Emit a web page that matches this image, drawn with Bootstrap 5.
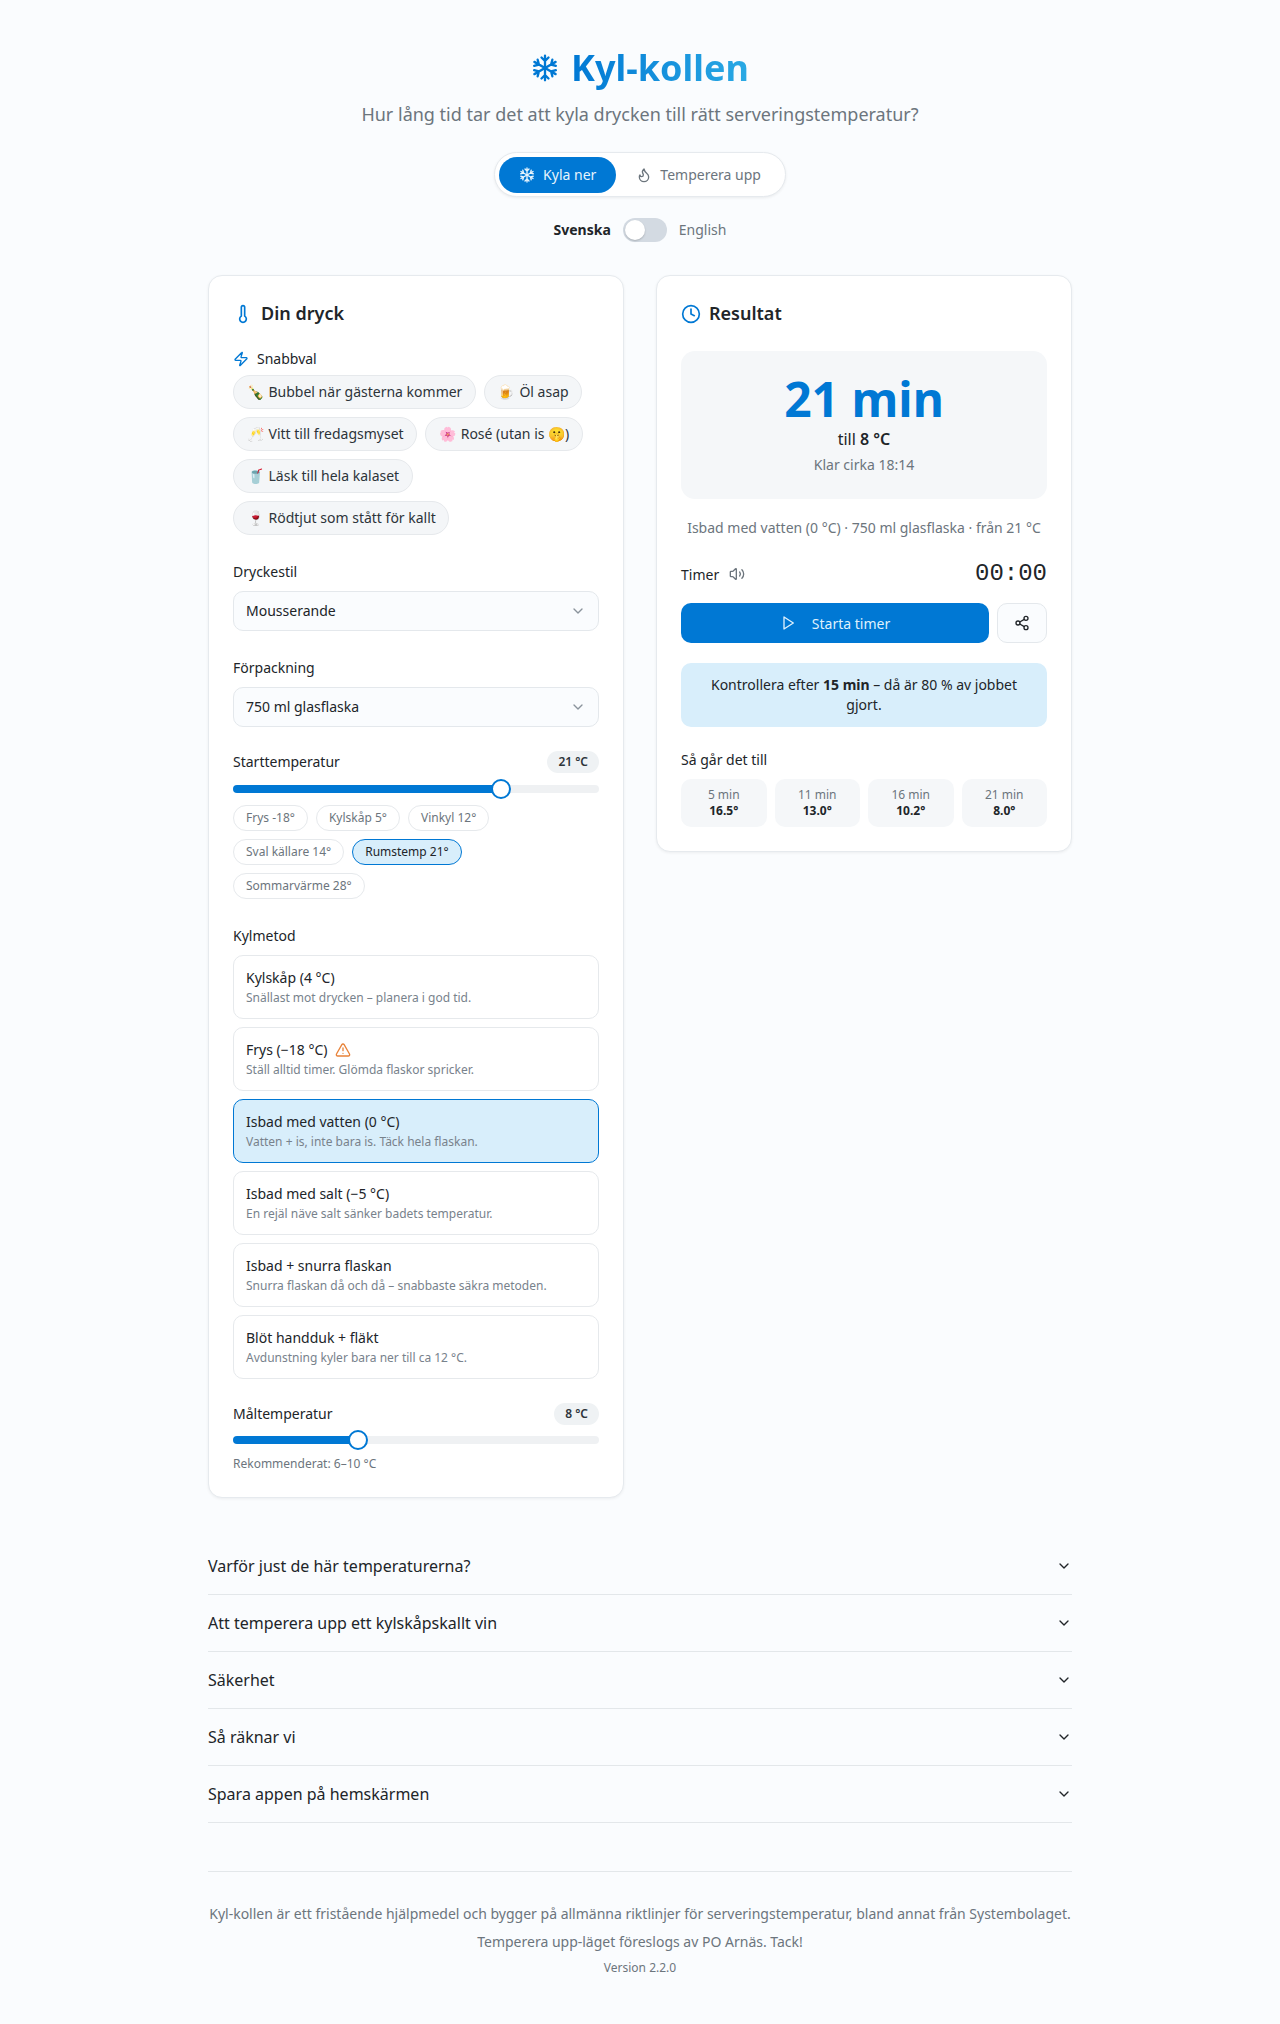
<!DOCTYPE html>
<html lang="sv">
<head>
    <meta charset="UTF-8">
    <meta name="viewport" content="width=device-width, initial-scale=1.0">
    <title>Kyl-kollen</title>
    <link href="https://cdn.jsdelivr.net/npm/bootstrap@5.3.0/dist/css/bootstrap.min.css" rel="stylesheet">
    <style>
        body {
            font-family: "Noto Sans", "Liberation Sans", sans-serif;
            background-color: #fafcfe;
            color: #212529;
            font-size: 14px;
        }
        svg.ico {
            fill: none;
            stroke: currentColor;
            stroke-width: 2;
            stroke-linecap: round;
            stroke-linejoin: round;
            flex-shrink: 0;
        }
        .page-wrap {
            max-width: 896px;
            padding-top: 40px;
        }
        .app-title {
            font-size: 36px;
            font-weight: 700;
            line-height: 56px;
            margin: 0 0 5px;
            color: #0078d4;
            gap: 12px;
        }
        .app-title .grad {
            background: linear-gradient(90deg, #0078d4, #2aa9e4);
            -webkit-background-clip: text;
            background-clip: text;
            color: transparent;
        }
        .app-sub {
            font-size: 18px;
            line-height: 27px;
            color: #6c757d;
            margin: 0 0 24px;
        }
        /* mode switch */
        .mode-pill {
            background: #fff;
            border: 1px solid #e6eaee;
            border-radius: 23px;
            padding: 3.5px 4px;
            box-shadow: 0 1px 3px rgba(0, 0, 0, .07);
        }
        .mode-btn {
            display: flex;
            align-items: center;
            gap: 8px;
            height: 36px;
            padding: 0 20px;
            border: 0;
            border-radius: 18px;
            background: transparent;
            color: #6c757d;
            font-size: 14px;
        }
        .mode-btn.on {
            background: #0078d4;
            color: #e6f4fd;
        }
        .lang-row {
            margin-top: 21px;
            margin-bottom: 33px;
            height: 24px;
        }
        .lang-row > span {
            margin-top: -2px;
        }
        .lang-toggle {
            width: 44px;
            height: 24px;
            border-radius: 12px;
            background: #d3dae2;
            padding: 2px;
        }
        .lang-toggle span {
            display: block;
            width: 20px;
            height: 20px;
            border-radius: 50%;
            background: #fff;
            box-shadow: 0 1px 2px rgba(0, 0, 0, .2);
        }
        .cols {
            --bs-gutter-x: 32px;
        }
        .panel {
            background: #fff;
            border: 1px solid #e6eaee;
            border-radius: 14px;
            padding: 24px;
            box-shadow: 0 1px 3px rgba(0, 0, 0, .06);
        }
        .panel-head {
            font-size: 18px;
            font-weight: 600;
            line-height: 27px;
            margin: 0;
        }
        .ic-blue { color: #0078d4; }
        .fld-label {
            line-height: 21px;
            margin: 0;
            display: block;
        }
        .temp-head .fld-label {
            margin-top: -2px;
        }
        /* chips */
        .drink-chip {
            display: inline-flex;
            align-items: center;
            gap: 5px;
            height: 34px;
            padding: 0 12.5px 2px;
            border: 1px solid #e6e9ec;
            border-radius: 17px;
            background: #f4f6f8;
            color: #2d343a;
            font-size: 14px;
        }
        .temp-chip {
            height: 26px;
            padding: 0 12px;
            border: 1px solid #e6e9ec;
            border-radius: 13px;
            background: #fff;
            color: #6c757d;
            font-size: 12px;
        }
        .temp-chip.on {
            background: #d8eefb;
            border-color: #0078d4;
            color: #212529;
        }
        .sel-box {
            height: 40px;
            border: 1px solid #e4e8ec;
            border-radius: 10px;
            background-color: #fafcfe;
            background-image: url("data:image/svg+xml,%3csvg xmlns='http://www.w3.org/2000/svg' viewBox='0 0 24 24' fill='none' stroke='%238a939c' stroke-width='2' stroke-linecap='round' stroke-linejoin='round'%3e%3cpath d='m6 9 6 6 6-6'/%3e%3c/svg%3e");
            background-size: 16px 16px;
            background-position: right 12px center;
            color: #212529;
            font-size: 14px;
            padding: 0 36px 2px 12px;
        }
        .val-tag {
            font-size: 12px;
            font-weight: 600;
            line-height: 22px;
            height: 22px;
            padding: 0 11px;
            border-radius: 11px;
            background: #eff2f4;
            color: #2d343a;
        }
        /* range with filled track */
        .temp-range {
            -webkit-appearance: none;
            appearance: none;
            display: block;
            width: 100%;
            height: 20px;
            margin: 0;
            background: transparent;
        }
        .temp-range::-webkit-slider-runnable-track {
            height: 8px;
            border-radius: 4px;
            background: linear-gradient(90deg, #0078d4 var(--fill), #eff1f3 var(--fill));
        }
        .temp-range::-webkit-slider-thumb {
            -webkit-appearance: none;
            width: 20px;
            height: 20px;
            margin-top: -6px;
            border-radius: 50%;
            background: #fff;
            border: 2px solid #0078d4;
        }
        .method-card {
            height: 64px;
            padding: 12px;
            border: 1px solid #e6e9ec;
            border-radius: 10px;
            background: #fff;
        }
        .method-card.on {
            background: #d8eefb;
            border-color: #0078d4;
        }
        .method-name {
            line-height: 20px;
            display: flex;
            align-items: center;
            gap: 8px;
        }
        .method-note {
            font-size: 12px;
            line-height: 16px;
            color: #78828c;
            margin-top: 2px;
        }
        .warn-ic { color: #e8833a; }
        .hint-text {
            font-size: 12px;
            line-height: 18px;
            color: #6c757d;
        }
        /* result side */
        .hero-box {
            background: #f5f7f9;
            border-radius: 14px;
            padding: 24px;
            height: 148px;
        }
        .hero-num {
            font-size: 48px;
            font-weight: 700;
            line-height: 48px;
            color: #0078d4;
        }
        .hero-to {
            font-size: 16px;
            line-height: 24px;
            margin-top: 4px;
        }
        .hero-to b { font-weight: 600; }
        .hero-eta {
            line-height: 21px;
            color: #6c757d;
            margin-top: 3px;
        }
        .sum-line {
            line-height: 21px;
            color: #6c757d;
            margin-top: 18px;
            margin-bottom: 18px;
        }
        .clock-read {
            font-family: "Liberation Mono", monospace;
            font-size: 24px;
            line-height: 36px;
        }
        .timer-label { gap: 10px; }
        .mute-ic { color: #6c757d; }
        .start-btn {
            height: 40px;
            border: 0;
            border-radius: 10px;
            padding-bottom: 1px;
            background: #0078d4;
            color: #dff1fd;
            font-size: 14px;
        }
        .share-btn {
            width: 50px;
            height: 40px;
            border: 1px solid #e4e8ec;
            border-radius: 10px;
            background: #fafcfe;
            color: #212529;
        }
        .tip-box {
            background: #d8eefb;
            border-radius: 10px;
            padding: 12px 16px;
            line-height: 20px;
        }
        .step-grid {
            display: grid;
            grid-template-columns: repeat(4, 1fr);
            gap: 8px;
        }
        .step-box {
            background: #f5f7f9;
            border-radius: 10px;
            padding: 8px 4px;
            height: 48px;
            font-size: 12px;
            line-height: 16px;
        }
        .step-box span {
            display: block;
            color: #6c757d;
        }
        /* accordion */
        .faq-list {
            --bs-accordion-bg: transparent;
            --bs-accordion-border-color: #e3e7ea;
            --bs-accordion-btn-padding-x: 0;
            --bs-accordion-btn-padding-y: 16px;
            --bs-accordion-btn-icon-width: 16px;
            --bs-accordion-btn-color: #212529;
            --bs-accordion-btn-icon: url("data:image/svg+xml,%3csvg xmlns='http://www.w3.org/2000/svg' viewBox='0 0 24 24' fill='none' stroke='%23212529' stroke-width='2' stroke-linecap='round' stroke-linejoin='round'%3e%3cpath d='m6 9 6 6 6-6'/%3e%3c/svg%3e");
            margin-top: 40px;
        }
        .faq-list .accordion-button {
            font-size: 16px;
            line-height: 24px;
            box-shadow: none;
        }
        .faq-list .accordion-item:last-child {
            border-bottom: 1px solid #e3e7ea;
        }
        .foot-area {
            margin-top: 48px;
            padding-top: 31px;
            border-top: 1px solid #e3e7ea;
            color: #6c757d;
        }
        .foot-area p {
            margin: 0 0 7px;
            line-height: 21px;
        }
        .foot-ver {
            font-size: 12px;
            line-height: 18px;
        }
        /* spacing between the form rows */
        #quickLabel { margin-top: 21px; margin-bottom: 6px; }
        #styleLabel { margin-top: 26px; margin-bottom: 9px; }
        #packLabel { margin-top: 26px; margin-bottom: 9px; }
        #startHead { margin-top: 24px; margin-bottom: 6px; }
        #tempChips { margin-top: 6px; }
        #methodLabel { margin-top: 26px; margin-bottom: 9px; }
        #targetHead { margin-top: 24px; margin-bottom: 5px; }
        #targetHint { margin-top: 5px; }
        #resultHead { margin-bottom: 24px; }
        #timerBtns { margin-top: 11px; }
        #tipBox { margin-top: 20px; }
        #stepsLabel { margin-top: 22px; margin-bottom: 9px; }
    </style>
</head>
<body>
    <svg width="0" height="0" class="position-absolute">
        <defs>
            <symbol id="i-snow" viewBox="0 0 24 24">
                <path d="M12 12V1.5M9 3l3 3 3-3"/>
                <path d="M12 12V1.5M9 3l3 3 3-3" transform="rotate(60 12 12)"/>
                <path d="M12 12V1.5M9 3l3 3 3-3" transform="rotate(120 12 12)"/>
                <path d="M12 12V1.5M9 3l3 3 3-3" transform="rotate(180 12 12)"/>
                <path d="M12 12V1.5M9 3l3 3 3-3" transform="rotate(240 12 12)"/>
                <path d="M12 12V1.5M9 3l3 3 3-3" transform="rotate(300 12 12)"/>
            </symbol>
            <symbol id="i-flame" viewBox="0 0 24 24"><path d="M8.5 14.5A2.5 2.5 0 0 0 11 12c0-1.38-.5-2-1-3-1.072-2.143-.224-4.054 2-6 .5 2.5 2 4.9 4 6.5 2 1.6 3 3.5 3 5.5a7 7 0 1 1-14 0c0-1.153.433-2.294 1-3a2.5 2.5 0 0 0 2.5 2.5z"/></symbol>
            <symbol id="i-therm" viewBox="0 0 24 24"><path d="M14 4v10.54a4 4 0 1 1-4 0V4a2 2 0 0 1 4 0Z"/></symbol>
            <symbol id="i-zap" viewBox="0 0 24 24"><path d="M4 14a1 1 0 0 1-.78-1.63l9.9-10.2a.5.5 0 0 1 .86.46l-1.92 6.02A1 1 0 0 0 13 10h7a1 1 0 0 1 .78 1.63l-9.9 10.2a.5.5 0 0 1-.86-.46l1.92-6.02A1 1 0 0 0 11 14z"/></symbol>
            <symbol id="i-clock" viewBox="0 0 24 24"><circle cx="12" cy="12" r="10"/><polyline points="12 6 12 12 16 14"/></symbol>
            <symbol id="i-vol" viewBox="0 0 24 24"><path d="M11 4.702a.705.705 0 0 0-1.203-.498L6.413 7.587A1.4 1.4 0 0 1 5.416 8H3a1 1 0 0 0-1 1v6a1 1 0 0 0 1 1h2.416a1.4 1.4 0 0 1 .997.413l3.383 3.384A.705.705 0 0 0 11 19.298z"/><path d="M16 9a5 5 0 0 1 0 6"/><path d="M19.364 18.364a9 9 0 0 0 0-12.728"/></symbol>
            <symbol id="i-play" viewBox="0 0 24 24"><polygon points="6 3 20 12 6 21 6 3"/></symbol>
            <symbol id="i-share" viewBox="0 0 24 24"><circle cx="18" cy="5" r="3"/><circle cx="6" cy="12" r="3"/><circle cx="18" cy="19" r="3"/><line x1="8.59" y1="13.51" x2="15.42" y2="17.49"/><line x1="15.41" y1="6.51" x2="8.59" y2="10.49"/></symbol>
            <symbol id="i-warn" viewBox="0 0 24 24"><path d="m21.73 18-8-14a2 2 0 0 0-3.48 0l-8 14A2 2 0 0 0 4 21h16a2 2 0 0 0 1.73-3"/><path d="M12 9v4"/><path d="M12 17h.01"/></symbol>
        </defs>
    </svg>

    <div class="container page-wrap px-3">
        <!-- Header -->
        <header class="text-center">
            <h1 class="app-title d-flex justify-content-center align-items-center">
                <svg class="ico" width="28" height="28"><use href="#i-snow"/></svg>
                <span class="grad">Kyl-kollen</span>
            </h1>
            <p class="app-sub">Hur lång tid tar det att kyla drycken till rätt serveringstemperatur?</p>
            <div class="d-flex justify-content-center">
                <div class="mode-pill d-inline-flex">
                    <button class="mode-btn on"><svg class="ico" width="16" height="16"><use href="#i-snow"/></svg>Kyla ner</button>
                    <button class="mode-btn"><svg class="ico" width="16" height="16"><use href="#i-flame"/></svg>Temperera upp</button>
                </div>
            </div>
            <div class="lang-row d-flex justify-content-center align-items-center gap-2">
                <span class="fw-bold me-1">Svenska</span>
                <div class="lang-toggle"><span></span></div>
                <span class="text-secondary ms-1">English</span>
            </div>
        </header>

        <div class="row cols align-items-start">
            <!-- Input -->
            <div class="col-6">
                <section class="panel">
                    <h2 class="panel-head d-flex align-items-center gap-2"><svg class="ico ic-blue" width="20" height="20"><use href="#i-therm"/></svg>Din dryck</h2>

                    <div class="fld-label d-flex align-items-center gap-2" id="quickLabel"><svg class="ico ic-blue" width="16" height="16"><use href="#i-zap"/></svg>Snabbval</div>
                    <div class="d-flex flex-wrap gap-2" id="quickChips"></div>

                    <label class="fld-label" id="styleLabel">Dryckestil</label>
                    <select class="form-select sel-box" id="styleSel"><option>Mousserande</option></select>

                    <label class="fld-label" id="packLabel">Förpackning</label>
                    <select class="form-select sel-box" id="packSel"><option>750 ml glasflaska</option></select>

                    <div class="temp-head d-flex justify-content-between align-items-center" id="startHead">
                        <span class="fld-label">Starttemperatur</span>
                        <span class="val-tag">21 °C</span>
                    </div>
                    <input type="range" class="temp-range" id="startRange" min="-20" max="35" value="21">
                    <div class="d-flex flex-wrap gap-2" id="tempChips"></div>

                    <div class="fld-label" id="methodLabel">Kylmetod</div>
                    <div class="d-grid gap-2" id="methods"></div>

                    <div class="temp-head d-flex justify-content-between align-items-center" id="targetHead">
                        <span class="fld-label">Måltemperatur</span>
                        <span class="val-tag">8 °C</span>
                    </div>
                    <input type="range" class="temp-range" id="targetRange" min="0" max="24" value="8">
                    <div class="hint-text" id="targetHint">Rekommenderat: 6–10 °C</div>
                </section>
            </div>

            <!-- Result -->
            <div class="col-6">
                <section class="panel">
                    <h2 class="panel-head d-flex align-items-center gap-2" id="resultHead"><svg class="ico ic-blue" width="20" height="20"><use href="#i-clock"/></svg>Resultat</h2>
                    <div class="hero-box text-center">
                        <div class="hero-num">21 min</div>
                        <div class="hero-to">till <b>8 °C</b></div>
                        <div class="hero-eta">Klar cirka 18:14</div>
                    </div>
                    <div class="sum-line text-center">Isbad med vatten (0 °C) · 750 ml glasflaska · från 21 °C</div>
                    <div class="d-flex justify-content-between align-items-center">
                        <div class="timer-label d-flex align-items-center">Timer <svg class="ico mute-ic" width="16" height="16"><use href="#i-vol"/></svg></div>
                        <div class="clock-read">00:00</div>
                    </div>
                    <div class="d-flex gap-2" id="timerBtns">
                        <button class="start-btn flex-fill d-flex justify-content-center align-items-center gap-3"><svg class="ico" width="16" height="16"><use href="#i-play"/></svg>Starta timer</button>
                        <button class="share-btn d-flex justify-content-center align-items-center"><svg class="ico" width="16" height="16"><use href="#i-share"/></svg></button>
                    </div>
                    <div class="tip-box text-center" id="tipBox">Kontrollera efter <b>15 min</b> – då är 80 % av jobbet gjort.</div>
                    <div class="fld-label" id="stepsLabel">Så går det till</div>
                    <div class="step-grid text-center" id="steps"></div>
                </section>
            </div>
        </div>

        <!-- FAQ -->
        <div class="accordion accordion-flush faq-list" id="faq"></div>

        <footer class="foot-area text-center">
            <p>Kyl-kollen är ett fristående hjälpmedel och bygger på allmänna riktlinjer för serveringstemperatur, bland annat från Systembolaget.</p>
            <p>Temperera upp-läget föreslogs av PO Arnäs. Tack!</p>
            <div class="foot-ver">Version 2.2.0</div>
        </footer>
    </div>

    <script src="https://cdn.jsdelivr.net/npm/bootstrap@5.3.0/dist/js/bootstrap.bundle.min.js"></script>
    <script>
        const quick = [
            ['🍾', 'Bubbel när gästerna kommer'],
            ['🍺', 'Öl asap'],
            ['🥂', 'Vitt till fredagsmyset'],
            ['🌸', 'Rosé (utan is 🤫)'],
            ['🥤', 'Läsk till hela kalaset'],
            ['🍷', 'Rödtjut som stått för kallt']
        ];
        const temps = ['Frys -18°', 'Kylskåp 5°', 'Vinkyl 12°', 'Sval källare 14°', 'Rumstemp 21°', 'Sommarvärme 28°'];
        const methods = [
            ['Kylskåp (4 °C)', 'Snällast mot drycken – planera i god tid.'],
            ['Frys (−18 °C)', 'Ställ alltid timer. Glömda flaskor spricker.'],
            ['Isbad med vatten (0 °C)', 'Vatten + is, inte bara is. Täck hela flaskan.'],
            ['Isbad med salt (−5 °C)', 'En rejäl näve salt sänker badets temperatur.'],
            ['Isbad + snurra flaskan', 'Snurra flaskan då och då – snabbaste säkra metoden.'],
            ['Blöt handduk + fläkt', 'Avdunstning kyler bara ner till ca 12 °C.']
        ];
        const steps = [['5 min', '16.5°'], ['11 min', '13.0°'], ['16 min', '10.2°'], ['21 min', '8.0°']];
        const faq = ['Varför just de här temperaturerna?', 'Att temperera upp ett kylskåpskallt vin', 'Säkerhet', 'Så räknar vi', 'Spara appen på hemskärmen'];

        document.getElementById('quickChips').innerHTML = quick.map(q =>
            `<button class="drink-chip"><span>${q[0]}</span>${q[1]}</button>`).join('');

        document.getElementById('tempChips').innerHTML = temps.map(t =>
            `<button class="temp-chip ${t.startsWith('Rumstemp') ? 'on' : ''}">${t}</button>`).join('');

        document.getElementById('methods').innerHTML = methods.map((m, i) => `
            <div class="method-card ${i === 2 ? 'on' : ''}">
                <div class="method-name">${m[0]}${i === 1 ? '<svg class="ico warn-ic" width="16" height="16"><use href="#i-warn"/></svg>' : ''}</div>
                <div class="method-note">${m[1]}</div>
            </div>`).join('');

        document.getElementById('steps').innerHTML = steps.map(s =>
            `<div class="step-box"><span>${s[0]}</span><b>${s[1]}</b></div>`).join('');

        document.getElementById('faq').innerHTML = faq.map((f, i) => `
            <div class="accordion-item">
                <h3 class="accordion-header">
                    <button class="accordion-button collapsed" type="button" data-bs-toggle="collapse" data-bs-target="#faq${i}">${f}</button>
                </h3>
                <div id="faq${i}" class="accordion-collapse collapse" data-bs-parent="#faq"><div class="accordion-body"></div></div>
            </div>`).join('');

        // filled part of the sliders
        document.querySelectorAll('.temp-range').forEach(r => {
            const pct = (r.value - r.min) / (r.max - r.min);
            r.style.setProperty('--fill', `calc(10px + (100% - 20px) * ${pct})`);
        });
    </script>
</body>
</html>
